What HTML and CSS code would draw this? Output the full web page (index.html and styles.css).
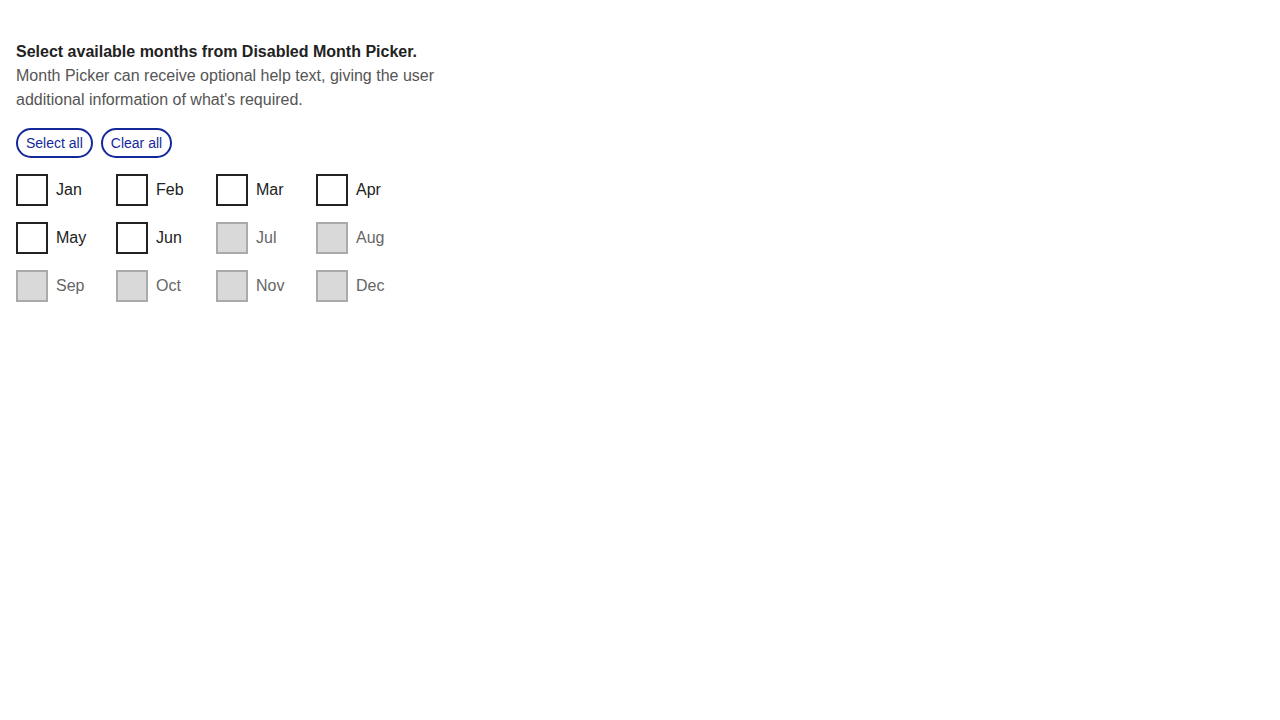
FILE: index.html
```html
<!DOCTYPE html>
<html lang="en">
<head>
<meta charset="utf-8">
<title>Month Picker</title>
<link rel="stylesheet" href="styles.css">
</head>
<body>
<div class="page">
  <fieldset class="picker">
    <legend class="legend">
      <span class="title">Select available months from Disabled Month Picker.</span>
      <span class="help">Month Picker can receive optional help text, giving the user additional information of what's required.</span>
    </legend>
    <div class="actions">
      <button class="pill" type="button">Select all</button>
      <button class="pill" type="button">Clear all</button>
    </div>
    <div class="grid">
      <label class="month"><span class="box"></span><span class="name">Jan</span></label>
      <label class="month"><span class="box"></span><span class="name">Feb</span></label>
      <label class="month"><span class="box"></span><span class="name">Mar</span></label>
      <label class="month"><span class="box"></span><span class="name">Apr</span></label>
      <label class="month"><span class="box"></span><span class="name">May</span></label>
      <label class="month"><span class="box"></span><span class="name">Jun</span></label>
      <label class="month disabled"><span class="box"></span><span class="name">Jul</span></label>
      <label class="month disabled"><span class="box"></span><span class="name">Aug</span></label>
      <label class="month disabled"><span class="box"></span><span class="name">Sep</span></label>
      <label class="month disabled"><span class="box"></span><span class="name">Oct</span></label>
      <label class="month disabled"><span class="box"></span><span class="name">Nov</span></label>
      <label class="month disabled"><span class="box"></span><span class="name">Dec</span></label>
    </div>
  </fieldset>
</div>
</body>
</html>
```

FILE: styles.css
```css
html, body {
  margin: 0;
  padding: 0;
  background: #ffffff;
}

body {
  font-family: "Liberation Sans", Arial, sans-serif;
  font-size: 16px;
  line-height: 24px;
  color: #222222;
}

.page {
  padding: 40px 16px 16px;
}

.picker {
  border: 0;
  margin: 0;
  padding: 0;
  min-width: 0;
}

.legend {
  padding: 0;
  display: block;
  width: 430px;
  margin-bottom: 16px;
}

.title {
  display: block;
  font-weight: bold;
  color: #222222;
}

.help {
  display: block;
  color: #555555;
}

.actions {
  display: flex;
  gap: 8px;
  margin-bottom: 16px;
}

.pill {
  font-family: "Liberation Sans", Arial, sans-serif;
  font-size: 14px;
  line-height: 16px;
  height: 30px;
  padding: 0 8px;
  border: 2px solid #14289a;
  border-radius: 15px;
  background: #ffffff;
  color: #14289a;
  cursor: pointer;
}

.grid {
  display: grid;
  grid-template-columns: repeat(4, 100px);
  row-gap: 16px;
}

.month {
  display: flex;
  align-items: center;
  gap: 8px;
  height: 32px;
  cursor: pointer;
}

.box {
  width: 32px;
  height: 32px;
  box-sizing: border-box;
  border: 2px solid #222222;
  background: #ffffff;
  flex: none;
}

.name {
  color: #222222;
}

.month.disabled {
  cursor: default;
}

.month.disabled .box {
  border-color: #aaaaaa;
  background: #d9d9d9;
}

.month.disabled .name {
  color: #666666;
}
```
